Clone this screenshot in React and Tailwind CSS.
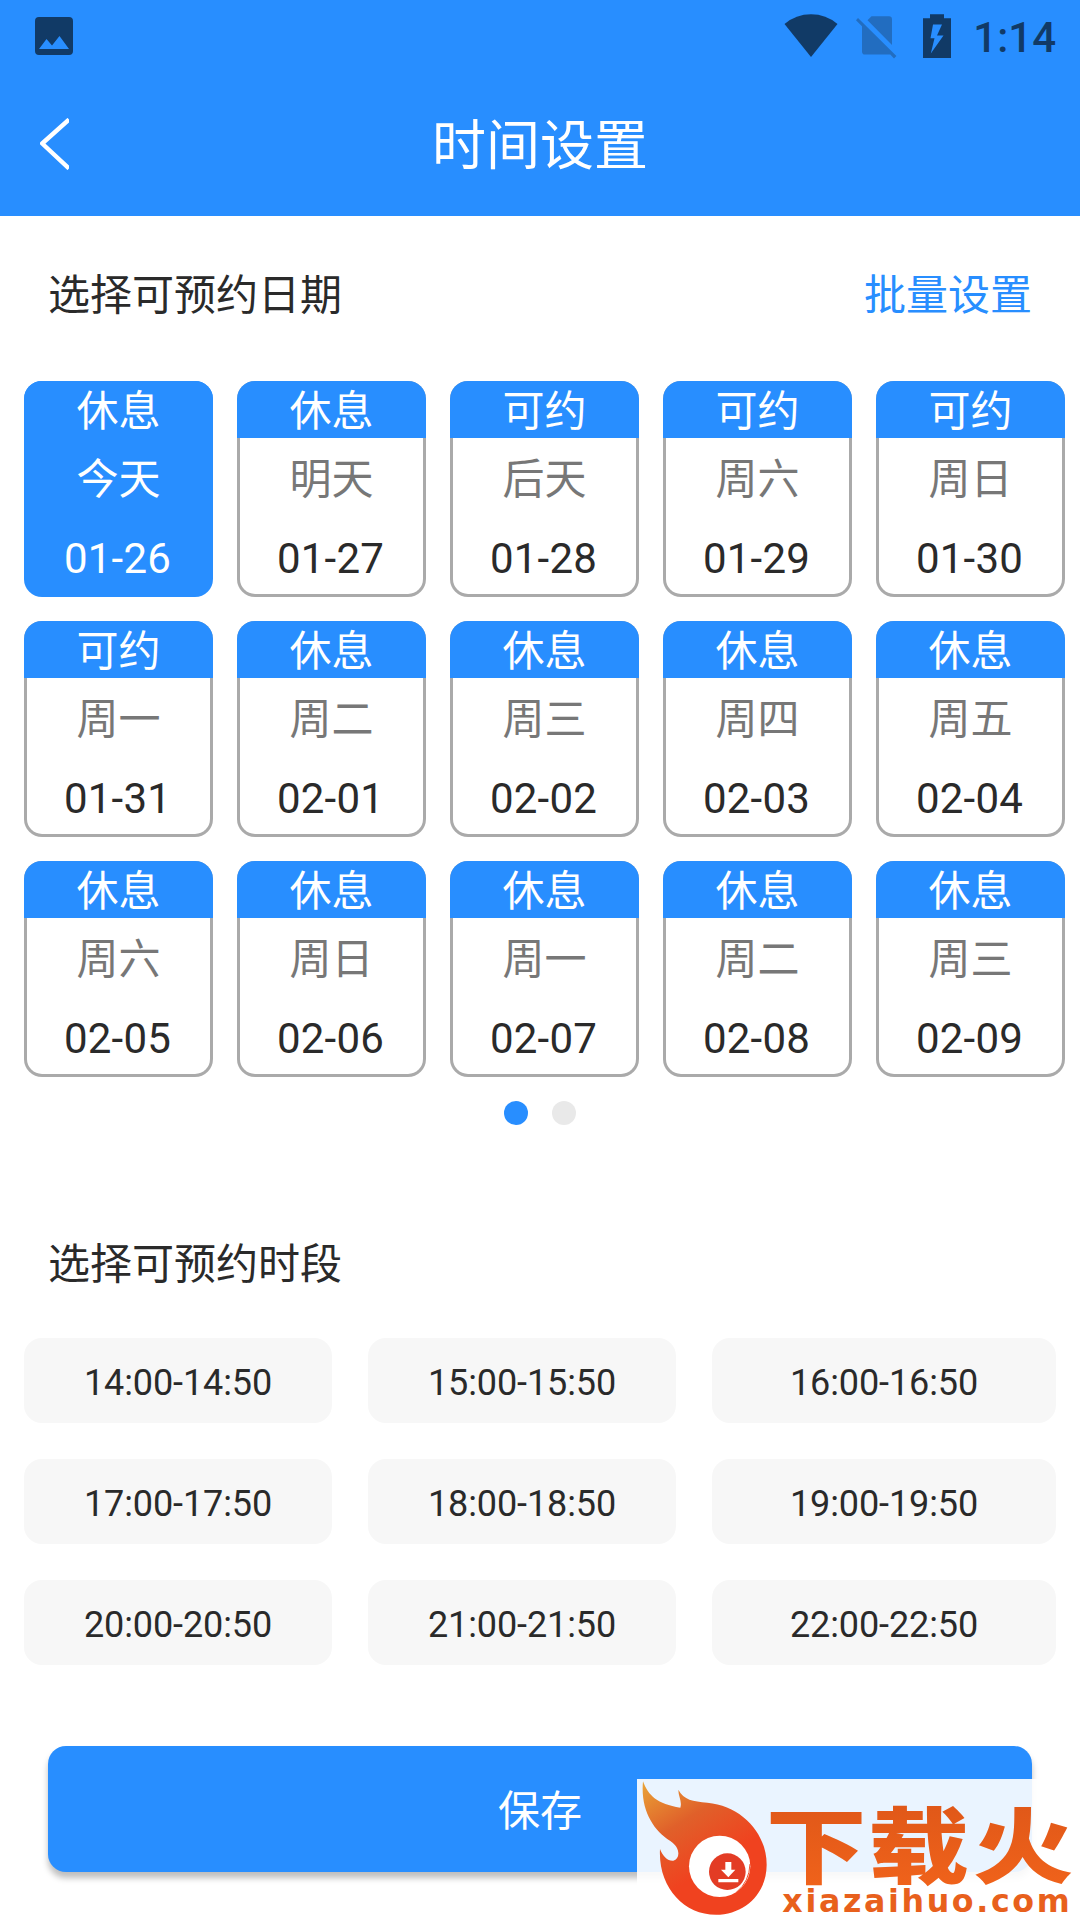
import React from "react";

const days = [
  ["休息", "今天", "01-26"],
  ["休息", "明天", "01-27"],
  ["可约", "后天", "01-28"],
  ["可约", "周六", "01-29"],
  ["可约", "周日", "01-30"],
  ["可约", "周一", "01-31"],
  ["休息", "周二", "02-01"],
  ["休息", "周三", "02-02"],
  ["休息", "周四", "02-03"],
  ["休息", "周五", "02-04"],
  ["休息", "周六", "02-05"],
  ["休息", "周日", "02-06"],
  ["休息", "周一", "02-07"],
  ["休息", "周二", "02-08"],
  ["休息", "周三", "02-09"],
];

const slots = [
  "14:00-14:50", "15:00-15:50", "16:00-16:50",
  "17:00-17:50", "18:00-18:50", "19:00-19:50",
  "20:00-20:50", "21:00-21:50", "22:00-22:50",
];

function StatusBar() {
  return (
    <div className="flex h-[72px] items-center justify-between pl-[35px] pr-6 text-[#113a66]">
      <svg className="h-[38px] w-[38px]" viewBox="0 0 38 38" fill="currentColor">
        <path fillRule="evenodd" d="M4 0H34A4 4 0 0 1 38 4V34A4 4 0 0 1 34 38H4A4 4 0 0 1 0 34V4A4 4 0 0 1 4 0ZM4 32H34L24.5 19L17 28.5L11.5 22Z" />
      </svg>
      <div className="flex h-full items-center">
        <svg className="mr-[18px] h-[44px] w-[54px]" viewBox="0 0 54 44" fill="currentColor">
          <path d="M0.5 10Q12 0.3 27 0.3T53.5 10L27 43Z" />
        </svg>
        <svg className="mr-[26px] h-[44px] w-[41px] overflow-visible" viewBox="0 0 41 44" fill="#226dc0">
          <path d="M15.5 2.2H33Q36 2.2 36 5.5V31L11.5 6.3ZM2 4L40.4 42L38 44.4L34.3 40.6H9Q6 40.6 6 37.5V12.3L0 6.2Z" />
        </svg>
        <svg className="mr-[22px] h-[44px] w-[28px]" viewBox="0 0 28 44" fill="currentColor">
          <path fillRule="evenodd" d="M7 0.3H21V4.2H28V44H0V4.2H7ZM10 10.5L7.5 24.3H11.5L7.8 39.5L20.5 21.5H14L19 10.5Z" />
        </svg>
        <span className="pt-[3px] text-[42px] font-medium leading-none">1:14</span>
      </div>
    </div>
  );
}

function TitleBar() {
  return (
    <div className="grid h-[144px] grid-cols-[1fr_auto_1fr] items-center">
      <svg className="ml-10 h-[52px] w-[29px]" viewBox="0 0 29 52" fill="none" stroke="#fff" strokeWidth="4.4">
        <path d="M29 1.5L2.2 25.5L29 50.5" strokeLinejoin="round" />
      </svg>
      <h1 className="pt-[6px] text-[54px] leading-none text-white">时间设置</h1>
    </div>
  );
}

function DayCard({ day, selected }) {
  const [status, weekday, date] = day;
  return (
    <div className={selected
      ? "grid h-[216px] grid-rows-[57px_159px] overflow-hidden rounded-[18px] bg-[#288eff] text-center text-[42px] text-white"
      : "grid h-[216px] grid-rows-[57px_159px] overflow-hidden rounded-[18px] bg-[#aaaaaa] text-center text-[42px]"}>
      <div className="bg-[#288eff] pt-[2px] leading-[57px] text-white">{status}</div>
      <div className={selected
        ? "mx-[3px] mb-[3px] pt-[2px] text-white"
        : "mx-[3px] mb-[3px] rounded-b-[15px] bg-white pt-[2px] text-[#2a2a2a]"}>
        <div className={selected ? "h-20 leading-[80px]" : "h-20 leading-[80px] text-[#777777]"}>{weekday}</div>
        <div className="h-[74px] pr-[2px] leading-[77px] tracking-[0.2px]">{date}</div>
      </div>
    </div>
  );
}

function SiteBadge() {
  return (
    <div className="absolute bottom-0 right-0 h-[141px] w-[443px] bg-white/90">
      <svg className="h-full w-full overflow-visible" viewBox="51 117 1329 423">
        <defs>
          <linearGradient id="flame" x1="70" y1="130" x2="240" y2="400" gradientUnits="userSpaceOnUse">
            <stop offset="0" stopColor="#e9a136" />
            <stop offset="0.5" stopColor="#e0602a" />
            <stop offset="1" stopColor="#f0421f" />
          </linearGradient>
          <linearGradient id="word" x1="0" y1="0" x2="0" y2="1">
            <stop offset="0" stopColor="#dc5518" />
            <stop offset="1" stopColor="#f2641b" />
          </linearGradient>
        </defs>
        <path fill="url(#flame)" d="M69 124C84 166 112 193 181 203C187 184 175 170 175 149C192 180 218 184 262 188C366 198 440 280 440 374C440 462 372 524 288 524C190 524 114 440 120 327C128 350 145 364 160 362C181 356 182 323 151 303C98 270 61 207 69 124Z" />
        <circle cx="299" cy="379" r="92" fill="#fff" />
        <circle cx="322" cy="395" r="55" fill="#e33c25" />
        <path d="M350 456Q388 425 390 372" fill="none" stroke="#f0512f" strokeWidth="3" />
        <path fill="#fff" d="M316 366H334V389H346L325 412L303 389H316ZM295 417H355V427H295Z" />
        <g fill="url(#word)" fontWeight="900" style={{ fontFamily: '"Noto Sans CJK SC", sans-serif' }}>
          <text transform="translate(437 410) scale(1 0.82)" fontSize="302">下</text>
          <text transform="translate(745 410) scale(1 0.82)" fontSize="302">载</text>
          <text transform="translate(1058 410) scale(1 0.82)" fontSize="302">火</text>
        </g>
        <text x="487" y="515" fontSize="95" fontWeight="700" textLength="862" fill="#e8601c" style={{ fontFamily: '"DejaVu Sans", sans-serif' }}>xiazaihuo.com</text>
      </svg>
    </div>
  );
}

export default function App() {
  return (
    <div className="relative flex h-[1920px] w-[1080px] flex-col overflow-hidden bg-white text-[#2a2a2a]" style={{ fontFamily: 'Roboto, "Noto Sans CJK SC", sans-serif' }}>
      <header className="h-[216px] bg-[#288eff]">
        <StatusBar />
        <TitleBar />
      </header>

      <section>
        <div className="flex h-[165px] items-start justify-between px-12 pt-[50px] text-[42px] leading-[60px]">
          <h2>选择可预约日期</h2>
          <button className="text-[#288eff]">批量设置</button>
        </div>
        <div className="grid grid-cols-[repeat(5,189px)] gap-6 pl-6">
          {days.map((day, i) => <DayCard key={day[2]} day={day} selected={i === 0} />)}
        </div>
        <div className="mt-6 flex justify-center gap-6">
          <span className="h-6 w-6 rounded-full bg-[#288eff]" />
          <span className="h-6 w-6 rounded-full bg-[#e9e9e9]" />
        </div>
      </section>

      <section className="mt-[108px]">
        <h2 className="h-[105px] px-12 pt-[2px] text-[42px] leading-[60px]">选择可预约时段</h2>
        <div className="grid grid-cols-[308px_308px_344px] gap-9 pl-6">
          {slots.map((slot) => (
            <div key={slot} className="h-[85px] rounded-[18px] bg-[#f7f7f7] pt-[2px] text-center text-[36px] leading-[87px] tracking-[-0.1px]">{slot}</div>
          ))}
        </div>
      </section>

      <button className="mx-12 mt-[81px] h-[126px] rounded-[18px] bg-[#288eff] pt-1 text-[42px] text-white shadow-[0_6px_6px_rgba(0,0,0,0.26)]">保存</button>
      <SiteBadge />
    </div>
  );
}
